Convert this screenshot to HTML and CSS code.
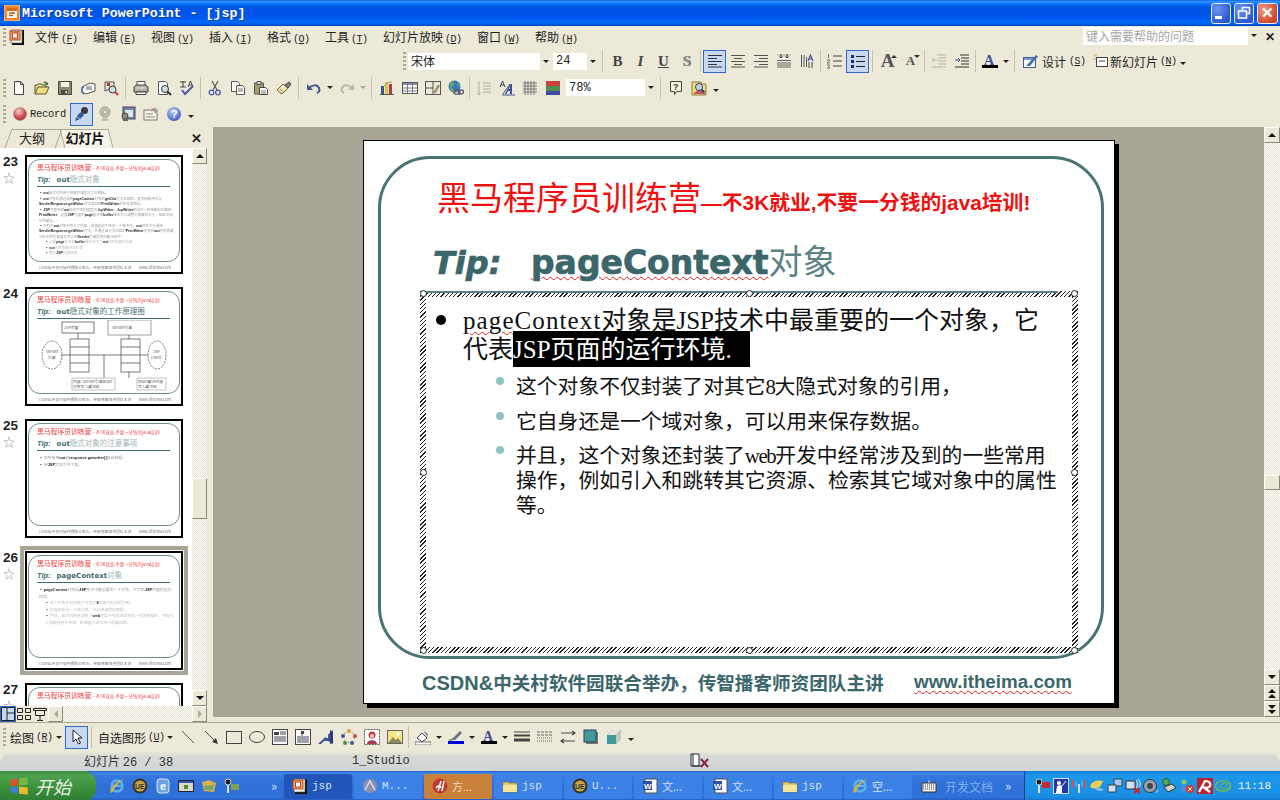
FILE: index.html
```html
<!DOCTYPE html>
<html lang="zh-CN">

<head>
    <meta charset="UTF-8">
    <title>Microsoft PowerPoint - [jsp]</title>
    <link rel="stylesheet" href="styles.css">
</head>

<body>
    <svg class="defs" xmlns="http://www.w3.org/2000/svg">
        <symbol id="pptapp" viewBox="0 0 16 16"><rect x="0" y="0" width="16" height="16" fill="#e8892b" stroke="#fff" stroke-width=".6"/><rect x="3" y="3" width="10" height="10" fill="#fff"/><path d="M3 3h10v3H3z" fill="#d2691e"/><path d="M5 8h6M5 10.500h4" stroke="#c0500f" stroke-width="1.500"/></symbol>
        <symbol id="pptdoc" viewBox="0 0 16 16"><path d="M3 1h12v15H3z" fill="#111"/><path d="M2 1h11v13H2z" fill="#fff" stroke="#555" stroke-width=".7"/><rect x="1" y="2" width="10" height="9" fill="#e9a678" stroke="#b5471b"/><rect x="3.500" y="4" width="5" height="5" fill="#fff" stroke="#b5471b"/></symbol>
        <symbol id="new" viewBox="0 0 16 16"><path d="M3.500 1.500h6l3 3v10h-9z" fill="#fff" stroke="#444"/><path d="M9.500 1.500v3h3" fill="none" stroke="#444"/></symbol>
        <symbol id="open" viewBox="0 0 16 16"><path d="M1 14V5h2l1-1h4l1 1h3v2" fill="#e9d88a" stroke="#5d5a34"/><path d="M1 14l3-7h11l-3 7z" fill="#f0dc82" stroke="#5d5a34"/><path d="M9 3c1-2 3-2 4 0l1-1v3h-3l1-1c-1-1-2-1-3-1z" fill="#4a7a4a"/></symbol>
        <symbol id="save" viewBox="0 0 16 16"><path d="M1.500 1.500h13v13h-13z" fill="#8f8c6e" stroke="#444"/><path d="M4 2h8v5H4z" fill="#f3f1e4"/><path d="M4 10h7v4.500H4z" fill="#4d4c3e"/><path d="M8.500 11h1.500v2.500H8.500z" fill="#ddd"/></symbol>
        <symbol id="mail" viewBox="0 0 16 16"><path d="M2 7l8-4 5 1v7l-9 3-4-2z" fill="#f6f5ee" stroke="#555"/><path d="M6 7h6M6 9h6" stroke="#668" /><path d="M4 14c-3-1-3-6 0-7" fill="none" stroke="#3a6fb0" stroke-width="1.200"/></symbol>
        <symbol id="perm" viewBox="0 0 16 16"><path d="M2 2h9v5l-9 4z" fill="#e8e4d3" stroke="#555"/><path d="M4 3h3v3H4z" fill="#a33"/><circle cx="9.500" cy="9.500" r="3.500" fill="#cfe0ef" stroke="#333"/><path d="M12 12l3 3" stroke="#c33" stroke-width="2"/></symbol>
        <symbol id="print" viewBox="0 0 16 16"><path d="M4 1.500h8v4H4z" fill="#fff" stroke="#555"/><path d="M1 7l2-2h10l2 2v5H1z" fill="#b3b09f" stroke="#444"/><path d="M3 12h10v2.500H3z" fill="#fff" stroke="#444"/><path d="M3 8h9" stroke="#eee"/></symbol>
        <symbol id="preview" viewBox="0 0 16 16"><path d="M2.500 1.500h7l2 2v11h-9z" fill="#fff" stroke="#555"/><circle cx="9" cy="9" r="3.500" fill="#cfe0ef" stroke="#333"/><path d="M11.500 11.500l3.500 3.500" stroke="#333" stroke-width="2"/></symbol>
        <symbol id="spell" viewBox="0 0 16 16"><path d="M1 2h6M4 1v6M1 7h6M9 7l2.500-6L14 7M10 5h3" fill="none" stroke="#444"/><path d="M3 10l3 4 8-8" fill="none" stroke="#4a5aa8" stroke-width="2"/></symbol>
        <symbol id="cut" viewBox="0 0 16 16"><path d="M5 1l5 9M11 1l-5 9" stroke="#555" stroke-width="1.200"/><circle cx="4.500" cy="12.500" r="2.300" fill="none" stroke="#4a5aa8" stroke-width="1.300"/><circle cx="11" cy="12.500" r="2.300" fill="none" stroke="#4a5aa8" stroke-width="1.300"/></symbol>
        <symbol id="copy" viewBox="0 0 16 16"><path d="M1.500 1.500h6l2 2v8h-8z" fill="#fff" stroke="#555"/><path d="M6.500 5.500h6l2 2v7h-8z" fill="#fff" stroke="#555"/><path d="M8 9h5M8 11h5" stroke="#777"/></symbol>
        <symbol id="paste" viewBox="0 0 16 16"><path d="M1.500 3h9v11h-9z" fill="#a89d70" stroke="#555"/><path d="M4 1.500h4v3H4z" fill="#ddd" stroke="#555"/><path d="M6.500 7.500h6l2 2v5h-8z" fill="#fff" stroke="#444"/><path d="M8 11h5M8 13h5" stroke="#777"/></symbol>
        <symbol id="painter" viewBox="0 0 16 16"><path d="M1 10l6-6 5 4-6 6z" fill="#f1e7b8" stroke="#6b6237"/><path d="M9 5l4-3 2 2-3 4z" fill="#7f7f86" stroke="#444"/><path d="M2 11l3 3M4 9l3 3" stroke="#b29c4d"/></symbol>
        <symbol id="undo" viewBox="0 0 16 16"><path d="M3 8c3-3 8-4 10 0 1 2 0 4-2 5" fill="none" stroke="#43588f" stroke-width="2"/><path d="M1 4v6h6z" fill="#43588f"/></symbol>
        <symbol id="redo" viewBox="0 0 16 16"><path d="M13 8c-3-3-8-4-10 0-1 2 0 4 2 5" fill="none" stroke="#b8b6a8" stroke-width="2"/><path d="M15 4v6H9z" fill="#b8b6a8"/></symbol>
        <symbol id="chart" viewBox="0 0 16 16"><path d="M1 14.500h14" stroke="#555"/><path d="M2 6h3v8H2z" fill="#2f4b95"/><path d="M6 2h3v12H6z" fill="#d9c53a"/><path d="M10 4h3v10h-3z" fill="#b7353a"/><path d="M2 14c2-8 5-12 11-12" fill="none" stroke="#777" stroke-width=".7"/></symbol>
        <symbol id="table" viewBox="0 0 16 16"><rect x=".5" y="2.500" width="15" height="11" fill="#fff" stroke="#555"/><path d="M1 3h14v2H1z" fill="#8b8ba0"/><path d="M1 8h14M1 11h14M5.500 3v10M10.500 3v10" stroke="#778"/></symbol>
        <symbol id="drawtable" viewBox="0 0 16 16"><rect x=".5" y="1.500" width="15" height="13" fill="none" stroke="#555"/><path d="M1 8h7M8 2v12" stroke="#555"/><path d="M9 12l4-7 1.500 1-4 7z" fill="#c9a64f" stroke="#555" stroke-width=".5"/></symbol>
        <symbol id="globe" viewBox="0 0 16 16"><circle cx="6.500" cy="6.500" r="6" fill="#3f74c4"/><path d="M3 2c3 0 4 2 3 3S3 6 4 8s3 1 3 4l-2 1C2 10 1 6 3 2zM9 2l3 3-2 2z" fill="#5fb05a"/><g fill="none" stroke="#556" stroke-width="1.300"><ellipse cx="9" cy="12" rx="3" ry="2.200"/><ellipse cx="13" cy="12" rx="2.600" ry="2.200"/></g></symbol>
        <symbol id="expand" viewBox="0 0 16 16"><path d="M3 1v14M1.500 13l1.500 2 1.500-2" fill="none" stroke="#b0ae9f"/><path d="M7 3h8M7 6h8M7 9h8M7 12h8" stroke="#b0ae9f"/></symbol>
        <symbol id="aformat" viewBox="0 0 16 16"><path d="M1 7l2.500-6L6 7M2 5h3" fill="none" stroke="#444"/><path d="M4 14l7-10" stroke="#555"/><path d="M6 14l5-10h2v10h-2v-3H9l-1.500 3zM10 9h1V6z" fill="#3f4fa0" fill-rule="evenodd"/><path d="M3 15h13" stroke="#3f4fa0"/></symbol>
        <symbol id="grid" viewBox="0 0 16 16"><path d="M1 3h14M1 6h14M1 9h14M1 12h14M3 1v14M6 1v14M9 1v14M12 1v14" stroke="#777"/></symbol>
        <symbol id="bars" viewBox="0 0 16 16"><path d="M1 1h14v5H1z" fill="#c9403c"/><path d="M1 6h14v5H1z" fill="#4f8f4d"/><path d="M1 11h14v4H1z" fill="#3f49a8"/></symbol>
        <symbol id="bubble" viewBox="0 0 16 16"><path d="M2.500 1.500h11v10h-5l-2 3v-3h-4z" fill="#f8f5d8" stroke="#444"/></symbol>
        <symbol id="mag" viewBox="0 0 16 16"><path d="M1 2h9l1 2h4v11H1z" fill="#f1dc7a" stroke="#8d7a3a"/><path d="M2 14l6-5 7 5z" fill="#c8506a"/><circle cx="8" cy="7" r="3.500" fill="#bcd3ea" stroke="#345"/><path d="M10.500 9.500l3 3" stroke="#345" stroke-width="2"/></symbol>
        <symbol id="ball" viewBox="0 0 16 16"><defs><radialGradient id="rb" cx=".4" cy=".3" r=".8"><stop offset="0" stop-color="#f6cfcf"/><stop offset=".6" stop-color="#d0494c"/><stop offset="1" stop-color="#9a3030"/></radialGradient></defs><circle cx="8" cy="8" r="6.500" fill="url(#rb)" stroke="#888" stroke-width=".6"/></symbol>
        <symbol id="mic" viewBox="0 0 16 16"><path d="M1 15c1-4 3-7 6-9l3 3c-2 3-5 5-9 6z" fill="#2f5b93"/><circle cx="10.500" cy="4.500" r="3.500" fill="#39393f"/><path d="M3 11l3 2" stroke="#9bbbe0"/></symbol>
        <symbol id="webcam" viewBox="0 0 16 16"><circle cx="8" cy="6" r="5" fill="#c4c2b4" stroke="#99978a"/><circle cx="8" cy="6" r="2.200" fill="#e9e7da" stroke="#99978a"/><path d="M4 15l2-4h4l2 4z" fill="#c4c2b4"/></symbol>
        <symbol id="slidecam" viewBox="0 0 16 16"><rect x="3" y="1" width="12" height="12" fill="#6f86a8" stroke="#445"/><rect x="5" y="4" width="8" height="7" fill="#dfe5ee"/><circle cx="5" cy="10" r="3" fill="#8a8a80" stroke="#444"/><rect x="3" y="12" width="5" height="3" fill="#666"/></symbol>
        <symbol id="mailslide" viewBox="0 0 16 16"><rect x="1" y="4" width="13" height="10" fill="#f7f4e6" stroke="#777"/><path d="M3 8h7M3 11h9" stroke="#888"/><path d="M9 2l6 2-3 4z" fill="#9a9fb5"/><path d="M8 5l5-3" stroke="#c63"/></symbol>
        <symbol id="helpball" viewBox="0 0 16 16"><defs><radialGradient id="hb" cx=".4" cy=".3" r=".8"><stop offset="0" stop-color="#b7cdf6"/><stop offset="1" stop-color="#2c50bb"/></radialGradient></defs><circle cx="8" cy="8" r="7" fill="url(#hb)"/></symbol>
        <symbol id="alignl" viewBox="0 0 16 16"><path d="M1 2.500h14M1 5.500h9M1 8.500h14M1 11.500h9M1 14h14" stroke="#333"/></symbol>
        <symbol id="alignc" viewBox="0 0 16 16"><path d="M1 2.500h14M4 5.500h8M1 8.500h14M4 11.500h8M1 14h14" stroke="#555"/></symbol>
        <symbol id="alignr" viewBox="0 0 16 16"><path d="M1 2.500h14M6 5.500h9M1 8.500h14M6 11.500h9M1 14h14" stroke="#555"/></symbol>
        <symbol id="vspace" viewBox="0 0 16 16"><path d="M1 7.500h14M1 10h14M1 12h14M1 14h14" stroke="#666"/><path d="M1 2h14" stroke="#aaa"/><path d="M5 1v4M3.500 3.500L5 5l1.500-1.500M11 1v4M9.500 3.500L11 5l1.500-1.500" fill="none" stroke="#333"/></symbol>
        <symbol id="hdir" viewBox="0 0 16 16"><path d="M2.500 2v12M5 2v12M7.500 4v10" stroke="#555"/><path d="M9 8l2.500-6L14 8M10 6h3" fill="none" stroke="#3f4fa0" stroke-width="1.200"/><path d="M10 9v6M13 9v6" stroke="#444"/></symbol>
        <symbol id="numlist" viewBox="0 0 16 16"><path d="M1.500 1v4M0 7h3L0 10h3M0 12h3l-1.500 1.500L3 15H0" fill="none" stroke="#555" stroke-width=".8"/><path d="M6 3h9M6 8h9M6 13h9" stroke="#444"/></symbol>
        <symbol id="bullist" viewBox="0 0 16 16"><path d="M1 2h3v3H1zM1 7h3v3H1zM1 12h3v3H1z" fill="#1c2b73"/><path d="M6 3.500h9M6 8.500h9M6 13.500h9" stroke="#222"/></symbol>
        <symbol id="outdent" viewBox="0 0 16 16"><path d="M6 2h9M7 5h8M7 8h8M7 11h8M1 14h14" stroke="#b6b4a5"/><path d="M1 7h5M3 5L1 7l2 2" fill="none" stroke="#b6b4a5"/></symbol>
        <symbol id="indent" viewBox="0 0 16 16"><path d="M6 2h9M7 5h8M7 8h8M7 11h8M1 14h14" stroke="#333"/><path d="M1 7h5M4 5l2 2-2 2" fill="none" stroke="#3f4fa0"/></symbol>
        <symbol id="colorbar" viewBox="0 0 16 16"><path d="M0 12h16v3H0z" fill="#000"/></symbol>
        <symbol id="design" viewBox="0 0 16 16"><rect x=".5" y="4.500" width="12" height="10" fill="#fff" stroke="#3f5f92"/><path d="M1 5h11v2H1z" fill="#7f9ac8"/><path d="M3 13L13 2l2 1.500L7 13z" fill="#4a6fae"/></symbol>
        <symbol id="newslide" viewBox="0 0 16 16"><path d="M2 1l2 3M1 6h3M4 1v2" stroke="#c9b45a"/><rect x="4.500" y="4.500" width="11" height="9" fill="#fff" stroke="#444"/><path d="M7 8h6" stroke="#444"/></symbol>
        <symbol id="cursor" viewBox="0 0 16 16"><path d="M4 1v12l3-3 2.500 5 2-1-2.500-5h4z" fill="#fff" stroke="#222"/></symbol>
        <symbol id="line" viewBox="0 0 16 16"><path d="M2 2l12 12" stroke="#555"/></symbol>
        <symbol id="arrow" viewBox="0 0 16 16"><path d="M2 2l12 12" stroke="#444"/><path d="M15 15l-6-2 4-4z" fill="#333"/></symbol>
        <symbol id="rect" viewBox="0 0 16 16"><rect x=".5" y="2.500" width="15" height="12" fill="none" stroke="#444"/></symbol>
        <symbol id="oval" viewBox="0 0 16 16"><ellipse cx="8" cy="8" rx="7.500" ry="5.500" fill="none" stroke="#444"/></symbol>
        <symbol id="textbox" viewBox="0 0 16 16"><rect x=".5" y=".5" width="15" height="15" fill="#fff" stroke="#444"/><path d="M2 3h5v3H2z" fill="#445"/><path d="M8 3h6M8 5h6M2 8h12M2 10h12M2 12h12" stroke="#445"/></symbol>
        <symbol id="vtext" viewBox="0 0 16 16"><rect x=".5" y=".5" width="15" height="15" fill="#fff" stroke="#444"/><path d="M3 7v7M5 7v7M7 3v11M9 7v7M11 7v7M13 7v7" stroke="#445"/><path d="M6 2h3v3H6z" fill="#445"/></symbol>
        <symbol id="wordart" viewBox="0 0 16 16"><path d="M15 1v14l-5-3H6l-3 3H0z" fill="#46529a"/><path d="M8 6v3h2V4z" fill="#ece9d8"/><path d="M12 1v14l3-1V3z" fill="#2f3a80"/></symbol>
        <symbol id="diagram" viewBox="0 0 16 16"><circle cx="8" cy="8" r="5.500" fill="none" stroke="#888" stroke-dasharray="2 2"/><circle cx="8" cy="2" r="2" fill="#d9a52e"/><circle cx="14" cy="7" r="2" fill="#c8504a"/><circle cx="11" cy="14" r="2" fill="#46529a"/><circle cx="4" cy="14" r="2" fill="#4a8f4a"/><circle cx="2" cy="7" r="2" fill="#46529a"/></symbol>
        <symbol id="clipart" viewBox="0 0 16 16"><rect x=".5" y=".5" width="15" height="15" fill="#fff" stroke="#555" stroke-dasharray="2 1"/><circle cx="8" cy="6" r="3.500" fill="#b8404a"/><path d="M3 15c0-5 10-5 10 0z" fill="#a53a55"/><circle cx="8" cy="7" r="2" fill="#eec9b0"/></symbol>
        <symbol id="picture" viewBox="0 0 16 16"><rect x=".5" y="1.500" width="15" height="13" fill="#f4e48c" stroke="#666"/><path d="M1 14l5-6 3 3 2-2 4 5z" fill="#8a8a5a"/><circle cx="11" cy="5" r="1.700" fill="#fff"/></symbol>
        <symbol id="fill" viewBox="0 0 16 16"><path d="M2 9l5-5 5 5-5 4z" fill="#fff" stroke="#444"/><path d="M8 1l5 4-1 3z" fill="#7f8eb8"/><path d="M0 13h16v3H0z" fill="#fff" stroke="#222" stroke-width=".6"/></symbol>
        <symbol id="linec" viewBox="0 0 16 16"><path d="M3 11L12 2l2 2-7 7z" fill="#6a6d88"/><path d="M1 11h3" stroke="#444"/><path d="M0 12h16v3H0z" fill="#0000d8"/></symbol>
        <symbol id="lines" viewBox="0 0 16 16"><path d="M0 3h16" stroke="#444"/><path d="M0 6.500h16" stroke="#444" stroke-width="2"/><path d="M0 11h16" stroke="#444" stroke-width="3"/></symbol>
        <symbol id="dash" viewBox="0 0 16 16"><path d="M0 3h16M0 6h16" stroke="#666" stroke-dasharray="3 1"/><path d="M0 9h16M0 12h16" stroke="#666" stroke-dasharray="1 1"/></symbol>
        <symbol id="arrows" viewBox="0 0 16 16"><path d="M1 4h14M1 12h14M12 2l3 2-3 2M4 10l-3 2 3 2" fill="none" stroke="#444" stroke-width="1.200"/></symbol>
        <symbol id="shadow" viewBox="0 0 16 16"><rect x="3" y="3" width="12" height="12" fill="#777"/><rect x="1" y="1" width="12" height="12" fill="#3e9a9a" stroke="#345"/></symbol>
        <symbol id="cube" viewBox="0 0 16 16"><path d="M1 6l5-5h9v9l-5 5H1z" fill="#3e9a9a"/><path d="M1 6h9l5-5H6z" fill="#e4e4da"/><path d="M10 6l5-5v9l-5 5z" fill="#c4c6c0"/></symbol>
        <symbol id="flag" viewBox="0 0 16 16"><path d="M1 3l6-1v5.500l-6 .500z" fill="#d9532c"/><path d="M8 2l7-1v6l-7 .500z" fill="#79b543"/><path d="M1 9l6-.500V14l-6-1z" fill="#3d7fd0"/><path d="M8 8.500l7 .500v6l-7-1z" fill="#e9bb2e"/></symbol>
        <symbol id="ie" viewBox="0 0 16 16"><circle cx="8" cy="8" r="5.500" fill="none" stroke="#5db3ec" stroke-width="2.500"/><path d="M4 8h8" stroke="#5db3ec" stroke-width="2"/><path d="M1 15C1 9 8 3 15 1c-4 3-9 7-11 13z" fill="#e9bb2e" opacity=".8"/></symbol>
        <symbol id="ue" viewBox="0 0 16 16"><circle cx="8" cy="8" r="7.500" fill="#33302a"/><circle cx="8" cy="8" r="5.500" fill="#c9a63f"/></symbol>
        <symbol id="oe" viewBox="0 0 16 16"><rect x="2" y="1" width="12" height="14" rx="3" fill="#6ea4e0" stroke="#dbe7f7"/></symbol>
        <symbol id="desk" viewBox="0 0 16 16"><rect x=".5" y="2.500" width="15" height="11" fill="#d9d7c8" stroke="#223"/><path d="M1 3h14v2H1z" fill="#2f59b0"/><path d="M6 7h4v4H6z" fill="#4a8f2d"/></symbol>
        <symbol id="colorf" viewBox="0 0 16 16"><path d="M1 4l7-2 7 3-2 9-10-1z" fill="#d9b04f"/><path d="M3 8l10-1-1 5H4z" fill="#76a568"/></symbol>
        <symbol id="plug" viewBox="0 0 16 16"><circle cx="4" cy="4" r="3" fill="#222" stroke="#ccc"/><path d="M3 7h2v8H3z" fill="#ddd"/><path d="M7 6h8v6H7z" fill="#7fa25a"/></symbol>
        <symbol id="plugr" viewBox="0 0 16 16"><circle cx="4" cy="4" r="3" fill="#222" stroke="#ccc"/><path d="M3 7h2v8H3z" fill="#ddd"/><path d="M7 4h8v6H7z" fill="#c8292f"/></symbol>
        <symbol id="folder" viewBox="0 0 16 16"><path d="M1 14V4h5l1 1h8v9z" fill="#e3c96e" stroke="#7d6a2a" stroke-width=".6"/><path d="M1 7h14v7H1z" fill="#f3e39b"/></symbol>
        <symbol id="word" viewBox="0 0 16 16"><rect x="3" y="1" width="12" height="14" fill="#fff" stroke="#555"/><rect x="1" y="3" width="9" height="9" fill="#2f4f9f"/></symbol>
        <symbol id="mdot" viewBox="0 0 16 16"><circle cx="8" cy="8" r="7" fill="#8b8fb0"/><path d="M3 12L8 3l5 9" fill="none" stroke="#dde" stroke-width="1.500"/></symbol>
        <symbol id="dw" viewBox="0 0 16 16"><circle cx="8" cy="8" r="7.500" fill="#c0392f"/><path d="M9 3L6 13M4 10c2-3 4-3 5 0M12 3l-2 10" fill="none" stroke="#fff" stroke-width="1.500"/></symbol>
        <symbol id="kbd" viewBox="0 0 16 16"><path d="M1 5h14v9H1z" fill="#f2f2ee" stroke="#333"/><path d="M2 7h12M2 9h12M2 11h12" stroke="#445" stroke-dasharray="1 1"/><path d="M8 5V2" stroke="#ddd"/></symbol>
        <symbol id="teach" viewBox="0 0 16 16"><rect x=".5" y=".5" width="15" height="15" fill="#2436a8" stroke="#cde"/><path d="M3 15l1-7 3-1 2 1v7z" fill="#fff"/><circle cx="6" cy="5" r="2" fill="#fff"/><path d="M9 8l4-5" stroke="#fff"/></symbol>
        <symbol id="antenna" viewBox="0 0 16 16"><path d="M8 6v9" stroke="#d8d8e8" stroke-width="2"/><path d="M3 2c-2 3-2 5 0 8M13 2c2 3 2 5 0 8" fill="none" stroke="#e2523e" stroke-width="1.500"/><path d="M5.500 3c-1 2-1 3 0 5M10.500 3c1 2 1 3 0 5" fill="none" stroke="#9fb7e8"/></symbol>
        <symbol id="msgr" viewBox="0 0 16 16"><path d="M1 9c0-4 6-8 13-6-2 6-6 10-13 6z" fill="#f0cd55"/><path d="M6 10c3-1 6 0 9 2-4 2-7 1-9-2z" fill="#8dbdea"/></symbol>
        <symbol id="net" viewBox="0 0 16 16"><rect x="7" y="1" width="8" height="7" fill="#a9c7ee" stroke="#345"/><rect x="1" y="7" width="8" height="7" fill="#d2dfef" stroke="#345"/></symbol>
        <symbol id="netx" viewBox="0 0 16 16"><rect x="1" y="3" width="9" height="8" fill="#d2dfef" stroke="#334"/><path d="M11 2c2 2 2 6 0 8M13 1c3 3 3 7 0 10" fill="none" stroke="#fff"/><path d="M9 10l6 5M15 10l-6 5" stroke="#c22" stroke-width="2"/></symbol>
        <symbol id="speaker" viewBox="0 0 16 16"><circle cx="7" cy="8" r="6.500" fill="#9aa3ad" stroke="#333"/><circle cx="7" cy="8" r="3" fill="#444"/><path d="M13 15l2-3" stroke="#ddd"/></symbol>
        <symbol id="shield" viewBox="0 0 16 16"><circle cx="5" cy="4" r="3.500" fill="#55a85a" stroke="#253"/><path d="M3 9l8-3 4 4-8 4z" fill="#cfd6c9" stroke="#333"/></symbol>
        <symbol id="users" viewBox="0 0 16 16"><circle cx="5" cy="4" r="2.500" fill="#8cc76e"/><path d="M1 13c0-7 8-7 8 0z" fill="#4f89d8"/><circle cx="11" cy="11" r="4" fill="#d9382e"/><path d="M9 9l4 4M13 9l-4 4" stroke="#fff"/></symbol>
        <symbol id="avira" viewBox="0 0 16 16"><rect width="16" height="16" fill="#b9232c"/><path d="M2 14L8 3c4 0 6 2 5 5-1 2-4 2-7 1l7 5" fill="none" stroke="#fff" stroke-width="2.200"/></symbol>
        <symbol id="nvidia" viewBox="0 0 16 16"><ellipse cx="8" cy="8" rx="7.500" ry="5" fill="none" stroke="#7ab648" stroke-width="1.500"/><ellipse cx="9" cy="8" rx="4" ry="2.500" fill="none" stroke="#7ab648"/></symbol>
        <symbol id="bookx" viewBox="0 0 20 16"><path d="M1 1h8v12H1z" fill="#fff" stroke="#223"/><path d="M3 1v12M3 13h9" stroke="#223"/><path d="M11 6l7 8M18 6l-7 8" stroke="#8a2340" stroke-width="2"/></symbol>
    </svg>

    <header class="titlebar">
        <svg class="ic title-ic"><use href="#pptapp"/></svg>
        <span class="title-text">Microsoft PowerPoint - [jsp]</span>
        <div class="winbtns">
            <button class="winbtn"><i class="wmin"></i></button>
            <button class="winbtn"><svg class="ic"><path d="M6.500 5V2.500h7v6H11M2.500 6h8v7h-8z" fill="none" stroke="#fff" stroke-width="1.500"/></svg></button>
            <button class="winbtn close">✕</button>
        </div>
    </header>

    <nav class="menubar">
        <span class="grip"></span>
        <svg class="ic doc-ic"><use href="#pptdoc"/></svg>
        <span class="menu w58">文件<em>(<u>F</u>)</em></span>
        <span class="menu w58">编辑<em>(<u>E</u>)</em></span>
        <span class="menu w58">视图<em>(<u>V</u>)</em></span>
        <span class="menu w58">插入<em>(<u>I</u>)</em></span>
        <span class="menu w58">格式<em>(<u>O</u>)</em></span>
        <span class="menu w58">工具<em>(<u>T</u>)</em></span>
        <span class="menu w94">幻灯片放映<em>(<u>D</u>)</em></span>
        <span class="menu w58">窗口<em>(<u>W</u>)</em></span>
        <span class="menu w58">帮助<em>(<u>H</u>)</em></span>
        <div class="askbox"><span>键入需要帮助的问题</span><b class="dd-cell"><i class="dd"></i></b></div>
        <span class="ask-x">✕</span>
    </nav>

    <div class="toolrow format-row">
        <span class="grip"></span>
        <div class="combo fontname"><span>宋体</span><b class="dd-cell"><i class="dd"></i></b></div>
        <div class="combo fontsize"><span class="mono">24</span><b class="dd-cell"><i class="dd"></i></b></div>
        <span class="sep"></span>
        <span class="btn letter"><b>B</b></span>
        <span class="btn letter"><b><i>I</i></b></span>
        <span class="btn letter"><b><u>U</u></b></span>
        <span class="btn letter ghost"><b>S</b></span>
        <span class="sep s5"></span>
        <span class="btn on"><svg class="ic"><use href="#alignl"/></svg></span>
        <span class="btn"><svg class="ic"><use href="#alignc"/></svg></span>
        <span class="btn"><svg class="ic"><use href="#alignr"/></svg></span>
        <span class="btn"><svg class="ic"><use href="#vspace"/></svg></span>
        <span class="btn"><svg class="ic"><use href="#hdir"/></svg></span>
        <span class="sep s5"></span>
        <span class="btn"><svg class="ic"><use href="#numlist"/></svg></span>
        <span class="btn on"><svg class="ic"><use href="#bullist"/></svg></span>
        <span class="sep"></span>
        <span class="btn sizea grow">A</span>
        <span class="btn sizea shrink">A</span>
        <span class="sep s5"></span>
        <span class="btn"><svg class="ic"><use href="#outdent"/></svg></span>
        <span class="btn"><svg class="ic"><use href="#indent"/></svg></span>
        <span class="sep s5"></span>
        <span class="btn"><svg class="ic"><use href="#colorbar"/><text class="ict-serif blue" x="2" y="11.500" font-size="14">A</text></svg></span>
        <span class="drop"><i class="dd"></i></span>
        <span class="sep"></span>
        <span class="txtbtn w67"><svg class="ic"><use href="#design"/></svg>设计<em>(<u>S</u>)</em></span>
        <span class="txtbtn w90"><svg class="ic"><use href="#newslide"/></svg>新幻灯片<em>(<u>N</u>)</em></span>
        <span class="more"></span>
    </div>

    <div class="toolrow std-row">
        <span class="grip"></span>
        <span class="btn"><svg class="ic"><use href="#new"/></svg></span>
        <span class="btn"><svg class="ic"><use href="#open"/></svg></span>
        <span class="btn"><svg class="ic"><use href="#save"/></svg></span>
        <span class="btn"><svg class="ic"><use href="#mail"/></svg></span>
        <span class="btn"><svg class="ic"><use href="#perm"/></svg></span>
        <span class="sep"></span>
        <span class="btn"><svg class="ic"><use href="#print"/></svg></span>
        <span class="btn"><svg class="ic"><use href="#preview"/></svg></span>
        <span class="btn"><svg class="ic"><use href="#spell"/></svg></span>
        <span class="sep s5"></span>
        <span class="btn"><svg class="ic"><use href="#cut"/></svg></span>
        <span class="btn"><svg class="ic"><use href="#copy"/></svg></span>
        <span class="btn"><svg class="ic"><use href="#paste"/></svg></span>
        <span class="btn"><svg class="ic"><use href="#painter"/></svg></span>
        <span class="sep"></span>
        <span class="btn"><svg class="ic"><use href="#undo"/></svg></span>
        <span class="drop"><i class="dd"></i></span>
        <span class="btn"><svg class="ic"><use href="#redo"/></svg></span>
        <span class="drop"><i class="dd off"></i></span>
        <span class="sep"></span>
        <span class="btn"><svg class="ic"><use href="#chart"/></svg></span>
        <span class="btn"><svg class="ic"><use href="#table"/></svg></span>
        <span class="btn"><svg class="ic"><use href="#drawtable"/></svg></span>
        <span class="btn"><svg class="ic"><use href="#globe"/></svg></span>
        <span class="sep s5"></span>
        <span class="btn"><svg class="ic"><use href="#expand"/></svg></span>
        <span class="btn"><svg class="ic"><use href="#aformat"/></svg></span>
        <span class="btn"><svg class="ic"><use href="#grid"/></svg></span>
        <span class="btn"><svg class="ic"><use href="#bars"/></svg></span>
        <div class="combo zoombox"><span class="mono">78%</span><b class="dd-cell"><i class="dd"></i></b></div>
        <span class="sep"></span>
        <span class="btn"><svg class="ic"><use href="#bubble"/><text class="ict" x="5" y="10" font-size="9">?</text></svg></span>
        <span class="btn"><svg class="ic"><use href="#mag"/></svg></span>
        <span class="more"></span>
    </div>

    <div class="toolrow rec-row">
        <span class="grip"></span>
        <svg class="ic rec-ball"><use href="#ball"/></svg>
        <span class="rec-text">Record</span>
        <span class="btn on"><svg class="ic"><use href="#mic"/></svg></span>
        <span class="btn"><svg class="ic"><use href="#webcam"/></svg></span>
        <span class="btn"><svg class="ic"><use href="#slidecam"/></svg></span>
        <span class="btn"><svg class="ic"><use href="#mailslide"/></svg></span>
        <span class="btn"><svg class="ic"><use href="#helpball"/><text class="ict white" x="5" y="12" font-size="11">?</text></svg></span>
        <span class="more"></span>
    </div>

    <main class="workspace">
        <aside class="leftpane">
            <div class="tabs">
                <span class="tab">大纲</span>
                <span class="tab active">幻灯片</span>
                <span class="pane-x">✕</span>
            </div>
            <div class="thumbs-wrap">
                <div class="thumbs">
                    <div class="thumb-row">
                        <div class="thumb-num"><b>23</b><span>☆</span></div>
                        <div class="thumb">
                            <div class="t-frame"></div>
                            <div class="t-title">黑马程序员训练营<small>—不3K就业,不要一分钱的java培训!</small></div>
                            <div class="t-tip"><i>Tip:</i><b>out</b><span>隐式对象</span></div>
                            <div class="t-body">
                                <p><b>out</b>隐式对象用于向客户端发送文本数据。</p>
                                <p><b>out</b>对象是通过调用<b>pageContext</b>对象的<b>getOut</b>方法返回的，其作用和用法与<b>ServletResponse.getWriter</b>方法返回的<b>PrintWriter</b>对象非常相似。</p>
                                <p><b>JSP</b>页面中的<b>out</b>隐式对象的类型为<b>JspWriter</b>，<b>JspWriter</b>相当于一种带缓存功能的<b>PrintWriter</b>，设置<b>JSP</b>页面的<b>page</b>指令的<b>buffer</b>属性可以调整它的缓存大小，甚至关闭它的缓存。</p>
                                <p>只有向<b>out</b>对象中写入了内容，且满足如下任何一个条件时，<b>out</b>对象才去调用<b>ServletResponse.getWriter</b>方法，并通过该方法返回的<b>PrintWriter</b>对象将<b>out</b>对象的缓冲区中的内容真正写入到<b>Servlet</b>引擎提供的缓冲区中：</p>
                                <p class="sub">设置<b>page</b>指令的<b>buffer</b>属性关闭了<b>out</b>对象的缓存功能</p>
                                <p class="sub"><b>out</b>对象的缓冲区已满</p>
                                <p class="sub">整个<b>JSP</b>页面结束</p>
                            </div>
                            <div class="t-foot"><span>CSDN&amp;中关村软件园联合举办，传智播客师资团队主讲</span><span>www.itheima.com</span></div>
                        </div>
                    </div>
                    <div class="thumb-row">
                        <div class="thumb-num"><b>24</b></div>
                        <div class="thumb">
                            <div class="t-frame"></div>
                            <div class="t-title">黑马程序员训练营<small>—不3K就业,不要一分钱的java培训!</small></div>
                            <div class="t-tip"><i>Tip:</i><b>out</b><span class="dark">隐式对象的工作原理图</span></div>
                            <svg class="t-diagram" viewBox="0 0 152 72">
                                <g fill="none" stroke="#444" stroke-width=".7">
                                    <rect x="34" y="2" width="32" height="11"/>
                                    <rect x="80" y="0" width="43" height="15" stroke="#777"/>
                                    <rect x="42" y="19" width="19" height="33"/>
                                    <rect x="93" y="19" width="19" height="33"/>
                                    <path d="M42 27h19M42 35h19M42 43h19M93 27h19M93 35h19M93 43h19M50 13v6M101 15v4M61 35h32M76 35v23M101 52v6M42 35h-9M120 35h-8" />
                                    <ellipse cx="24" cy="35" rx="10" ry="14" stroke-dasharray="2 1"/>
                                    <ellipse cx="129" cy="35" rx="9" ry="14" stroke-dasharray="2 1"/>
                                    <path d="M44 58h43v12H44zM109 58h29v12h-29z" stroke="#aaa"/>
                                </g>
                                <g class="t-dtext" font-size="3.800">
                                    <text x="36" y="9">JSP页面</text>
                                    <text x="84" y="9">Servlet引擎</text>
                                    <text x="18" y="33">Servlet</text>
                                    <text x="20" y="39">引擎</text>
                                    <text x="125" y="33">JSP</text>
                                    <text x="123" y="39">Client</text>
                                    <text x="45" y="63">内容: Servlet引擎将out</text>
                                    <text x="45" y="68">对象写入缓冲区</text>
                                    <text x="110" y="63">将out缓冲内容</text>
                                    <text x="110" y="68">写入缓冲区</text>
                                </g>
                            </svg>
                            <div class="t-foot"><span>CSDN&amp;中关村软件园联合举办，传智播客师资团队主讲</span><span>www.itheima.com</span></div>
                        </div>
                    </div>
                    <div class="thumb-row">
                        <div class="thumb-num"><b>25</b><span>☆</span></div>
                        <div class="thumb">
                            <div class="t-frame"></div>
                            <div class="t-title">黑马程序员训练营<small>—不3K就业,不要一分钱的java培训!</small></div>
                            <div class="t-tip"><i>Tip:</i><b>out</b><span>隐式对象的注意事项</span></div>
                            <div class="t-body roomy">
                                <p>同时使用<b>out</b>和<b>response.getwriter()</b>输出数据。</p>
                                <p>用<b>JSP</b>实现文件下载。</p>
                            </div>
                            <div class="t-foot"><span>CSDN&amp;中关村软件园联合举办，传智播客师资团队主讲</span><span>www.itheima.com</span></div>
                        </div>
                    </div>
                    <div class="thumb-row">
                        <div class="thumb-num"><b>26</b><span>☆</span></div>
                        <div class="thumb current">
                            <div class="t-frame"></div>
                            <div class="t-title">黑马程序员训练营<small>—不3K就业,不要一分钱的java培训!</small></div>
                            <div class="t-tip"><i>Tip:</i><b>pageContext</b><span>对象</span></div>
                            <div class="t-body roomy">
                                <p><b>pageContext</b>对象是<b>JSP</b>技术中最重要的一个对象，它代表<b>JSP</b>页面的运行环境.</p>
                                <p class="sub">这个对象不仅封装了对其它<b>8</b>大隐式对象的引用，</p>
                                <p class="sub">它自身还是一个域对象，可以用来保存数据。</p>
                                <p class="sub">并且，这个对象还封装了<b>web</b>开发中经常涉及到的一些常用操作，例如引入和跳转其它资源、检索其它域对象中的属性等。</p>
                            </div>
                            <div class="t-foot"><span>CSDN&amp;中关村软件园联合举办，传智播客师资团队主讲</span><span>www.itheima.com</span></div>
                        </div>
                    </div>
                    <div class="thumb-row">
                        <div class="thumb-num"><b>27</b><span>☆</span></div>
                        <div class="thumb">
                            <div class="t-frame"></div>
                            <div class="t-title">黑马程序员训练营<small>—不3K就业,不要一分钱的java培训!</small></div>
                        </div>
                    </div>
                </div>
                <div class="vscroll thin">
                    <span class="sbtn"><i class="tri up"></i></span>
                    <div class="track">
                        <span class="sthumb t1"></span>
                    </div>
                    <span class="sbtn"><i class="tri down"></i></span>
                </div>
            </div>
            <div class="viewbar">
                <span class="viewbtn on"><svg class="ic"><path d="M1.500 1.500h13v13h-13zM7 2v12M7 7h7" fill="none" stroke="#222"/></svg></span>
                <span class="viewbtn"><svg class="ic"><path d="M1.500 2.500h5v4h-5zM9.500 2.500h5v4h-5zM1.500 9.500h5v4h-5zM9.500 9.500h5v4h-5z" fill="none" stroke="#222"/></svg></span>
                <span class="viewbtn"><svg class="ic"><path d="M1.500 2.500h13v2h-13zM3.500 4.500h9v5h-9zM8 10v4M5 14.500h6" fill="none" stroke="#222"/></svg></span>
                <div class="hscroll">
                    <span class="sbtn"><i class="tri left off"></i></span>
                    <div class="track"></div>
                    <span class="sbtn"><i class="tri right off"></i></span>
                </div>
            </div>
        </aside>

        <div class="splitter"></div>

        <section class="canvas">
            <div class="slide">
                <div class="frame"></div>
                <h1 class="s-title">黑马程序员训练营<small>—不3K就业,不要一分钱的java培训!</small></h1>
                <h2 class="s-tip"><i>Tip:</i><b class="wavy">pageContext</b><span>对象</span></h2>
                <div class="selbox">
                    <span class="tline"></span>
                    <span class="h tl"></span><span class="h tc"></span><span class="h tr"></span>
                    <span class="h ml"></span><span class="h mr"></span>
                    <span class="h bl"></span><span class="h bc"></span><span class="h br"></span>
                    <div class="sel-inner">
                        <div class="item">
                            <span class="dot"></span>
                            <p><span class="lat long wavy">pageContext</span>对象是<span class="lat">JSP</span>技术中最重要的一个对象，它<br>代表<span class="hl"><span class="lat">JSP</span>页面的运行环境<span class="lat stop">.</span></span></p>
                        </div>
                        <div class="subitem">
                            <span class="subdot"></span>
                            <p>这个对象不仅封装了对其它<span class="lat2">8</span>大隐式对象的引用，</p>
                        </div>
                        <div class="subitem">
                            <span class="subdot"></span>
                            <p>它自身还是一个域对象，可以用来保存数据。</p>
                        </div>
                        <div class="subitem">
                            <span class="subdot"></span>
                            <p>并且，这个对象还封装了<span class="lat2">web</span>开发中经常涉及到的一些常用<br>操作，例如引入和跳转其它资源、检索其它域对象中的属性<br>等。</p>
                        </div>
                    </div>
                </div>
                <footer class="s-foot"><span><b>CSDN&amp;</b>中关村软件园联合举办，传智播客师资团队主讲</span><span class="wavy site">www.itheima.com</span></footer>
            </div>
        </section>

        <div class="vscroll wide">
            <span class="sbtn"><i class="tri up"></i></span>
            <div class="track"><span class="sthumb t2"></span></div>
            <span class="sbtn"><i class="tri down"></i></span>
            <span class="sbtn"><i class="tri up dbl"></i></span>
            <span class="sbtn"><i class="tri down dbl"></i></span>
        </div>
    </main>

    <div class="toolrow draw-row">
        <span class="grip"></span>
        <span class="txtbtn w48">绘图<em>(<u>R</u>)</em></span>
        <span class="drop tight"><i class="dd"></i></span>
        <span class="btn on"><svg class="ic"><use href="#cursor"/></svg></span>
        <span class="sep"></span>
        <span class="txtbtn w70">自选图形<em>(<u>U</u>)</em></span>
        <span class="drop tight"><i class="dd"></i></span>
        <span class="btn"><svg class="ic"><use href="#line"/></svg></span>
        <span class="btn"><svg class="ic"><use href="#arrow"/></svg></span>
        <span class="btn"><svg class="ic"><use href="#rect"/></svg></span>
        <span class="btn"><svg class="ic"><use href="#oval"/></svg></span>
        <span class="btn"><svg class="ic"><use href="#textbox"/></svg></span>
        <span class="btn"><svg class="ic"><use href="#vtext"/></svg></span>
        <span class="btn"><svg class="ic"><use href="#wordart"/></svg></span>
        <span class="btn"><svg class="ic"><use href="#diagram"/></svg></span>
        <span class="btn"><svg class="ic"><use href="#clipart"/></svg></span>
        <span class="btn"><svg class="ic"><use href="#picture"/></svg></span>
        <span class="sep s5"></span>
        <span class="btn"><svg class="ic"><use href="#fill"/></svg></span>
        <span class="drop"><i class="dd"></i></span>
        <span class="btn"><svg class="ic"><use href="#linec"/></svg></span>
        <span class="drop"><i class="dd"></i></span>
        <span class="btn"><svg class="ic"><use href="#colorbar"/><text class="ict-serif blue" x="2" y="11.500" font-size="14">A</text></svg></span>
        <span class="drop"><i class="dd"></i></span>
        <span class="btn"><svg class="ic"><use href="#lines"/></svg></span>
        <span class="btn"><svg class="ic"><use href="#dash"/></svg></span>
        <span class="btn"><svg class="ic"><use href="#arrows"/></svg></span>
        <span class="btn"><svg class="ic"><use href="#shadow"/></svg></span>
        <span class="btn"><svg class="ic"><use href="#cube"/></svg></span>
        <span class="more"></span>
    </div>

    <div class="statusbar">
        <span class="st-a">幻灯片 <span class="mono">26 / 38</span></span>
        <span class="st-b mono">1_Studio</span>
        <svg class="st-ic"><use href="#bookx"/></svg>
    </div>

    <footer class="taskbar">
        <div class="start"><svg class="ic"><use href="#flag"/></svg><span>开始</span></div>
        <div class="quick">
            <svg class="ic"><use href="#ie"/></svg>
            <svg class="ic"><use href="#ue"/><text class="ict" x="3" y="11" font-size="7">UE</text></svg>
            <svg class="ic"><use href="#oe"/><text class="ict white" x="5" y="12" font-size="11">e</text></svg>
            <svg class="ic"><use href="#desk"/></svg>
            <svg class="ic"><use href="#colorf"/></svg>
            <svg class="ic"><use href="#plug"/></svg>
            <span class="chev">»</span>
        </div>
        <div class="tasks">
            <span class="task active"><svg class="ic"><use href="#pptdoc"/></svg><span class="mono">jsp</span></span>
            <span class="task"><svg class="ic"><use href="#mdot"/></svg><span class="mono">M...</span></span>
            <span class="task orange"><svg class="ic"><use href="#dw"/></svg>方...</span>
            <span class="task"><svg class="ic"><use href="#folder"/></svg><span class="mono">jsp</span></span>
            <span class="task"><svg class="ic"><use href="#ue"/><text class="ict" x="3" y="11" font-size="7">UE</text></svg><span class="mono">U...</span></span>
            <span class="task"><svg class="ic"><use href="#word"/><text class="ict white" x="2" y="10.500" font-size="8">W</text></svg>文...</span>
            <span class="task"><svg class="ic"><use href="#word"/><text class="ict white" x="2" y="10.500" font-size="8">W</text></svg>文...</span>
            <span class="task"><svg class="ic"><use href="#folder"/></svg><span class="mono">jsp</span></span>
            <span class="task"><svg class="ic"><use href="#ie"/></svg>空...</span>
        </div>
        <div class="devdoc"><svg class="ic"><use href="#kbd"/></svg><span>开发文档</span><span class="chev">»</span></div>
        <div class="tray">
            <svg class="ic"><use href="#plugr"/></svg>
            <svg class="ic"><use href="#teach"/></svg>
            <svg class="ic"><use href="#antenna"/></svg>
            <svg class="ic"><use href="#msgr"/></svg>
            <svg class="ic"><use href="#net"/></svg>
            <svg class="ic"><use href="#netx"/></svg>
            <svg class="ic"><use href="#speaker"/></svg>
            <svg class="ic"><use href="#shield"/></svg>
            <svg class="ic"><use href="#users"/></svg>
            <svg class="ic"><use href="#avira"/></svg>
            <svg class="ic"><use href="#nvidia"/></svg>
            <span class="clock mono">11:18</span>
        </div>
    </footer>
</body>

</html>
```

FILE: styles.css
```css
/* page */
* {
    box-sizing: border-box;
}

body {
    margin: 0;
    width: 1280px;
    height: 800px;
    overflow: hidden;
    display: flex;
    flex-direction: column;
    background-color: #ece9d8;
    color: #222;
    font-family: "Noto Sans CJK SC", "Liberation Sans", sans-serif;
    font-size: 12px;
}

p,
h1,
h2 {
    margin: 0;
    font-weight: normal;
}

.defs {
    position: absolute;
    width: 0;
    height: 0;
}

.ic {
    width: 16px;
    height: 16px;
    flex: none;
}

/* letters inside icons */
.ict {
    font-family: "Liberation Sans", sans-serif;
    font-weight: bold;
    fill: #333;
}

.ict-serif {
    font-family: "Liberation Serif", serif;
    font-weight: bold;
    fill: #555;
}

.ict.white {
    fill: #fff;
}

.ict-serif.blue {
    fill: #3f4a8f;
}

.mono {
    font-family: "Liberation Mono", monospace;
}

em {
    font-style: normal;
    font-family: "Liberation Mono", monospace;
    font-size: 10px;
    letter-spacing: -0.5px;
    margin-left: 2px;
}

/* title bar */
.titlebar {
    height: 26px;
    flex: none;
    display: flex;
    align-items: center;
    padding-left: 4px;
    background: linear-gradient(#0a5fe0, #3593ff 6%, #127dff 12%, #0262ee 20%, #0054e3 30%, #0055eb 60%, #005bf5 72%, #026afe 82%, #0062ef 90%, #0052d6 96%, #0040ab);
}

.title-text {
    margin-left: 2px;
    color: #fff;
    font-family: "Liberation Mono", monospace;
    font-weight: bold;
    font-size: 13.300px;
    text-shadow: 1px 1px #0f3fa0;
}

.winbtns {
    margin-left: auto;
    margin-right: 2px;
    display: flex;
    gap: 3px;
}

.winbtn {
    width: 20px;
    height: 21px;
    padding: 0;
    display: flex;
    align-items: center;
    justify-content: center;
    color: #fff;
    font-size: 15px;
    font-weight: bold;
    border: 1px solid #e6eefc;
    border-radius: 3px;
    background: radial-gradient(circle at 30% 30%, #6d96ee, #2b56cf 75%);
}

.winbtn.close {
    width: 21px;
    background: radial-gradient(circle at 30% 30%, #ee9a80, #d1452a 75%);
}

.wmin {
    display: block;
    width: 7px;
    height: 3px;
    margin: 8px 5px 0 0;
    background-color: #fff;
}

/* menu bar */
.menubar {
    height: 22px;
    flex: none;
    display: flex;
    align-items: center;
    padding-left: 3px;
}

.grip {
    width: 3px;
    height: 18px;
    flex: none;
    background: repeating-linear-gradient(#aaa795 0 2px, transparent 2px 4px);
}

.doc-ic {
    margin: 0 10px 0 3px;
}

.menu {
    white-space: nowrap;
    margin-top: -2px;
}

.w58 {
    width: 58px;
}

.w94 {
    width: 94px;
}

.askbox {
    margin-left: auto;
    margin-top: -3px;
    width: 177px;
    height: 18px;
    display: flex;
    justify-content: space-between;
    align-items: center;
    background-color: #fff;
    color: #a5a5a5;
    padding-left: 3px;
}

.ask-x {
    width: 20px;
    text-align: center;
    font-weight: bold;
    margin-top: -3px;
}

/* tool rows */
.toolrow {
    flex: none;
    display: flex;
    align-items: center;
}

.format-row {
    height: 26px;
    padding-left: 403px;
}

.std-row {
    height: 27px;
    padding-left: 3px;
}

.rec-row {
    height: 26px;
    padding-left: 3px;
}

.draw-row {
    height: 29px;
    padding-left: 3px;
    border-top: 1px solid #aca899;
}

.btn {
    width: 23px;
    height: 23px;
    flex: none;
    display: flex;
    align-items: center;
    justify-content: center;
}

.std-row .grip + .btn {
    margin-left: 1px;
}

.btn.on {
    background-color: #c8d8f0;
    border: 1px solid #316ac5;
}

.letter {
    font-family: "Liberation Serif", serif;
    font-size: 15px;
    color: #444;
}

.ghost {
    color: #999;
    text-shadow: 1px 0 #666;
}

.sizea {
    position: relative;
    font-family: "Liberation Serif", serif;
    font-weight: bold;
    color: #555;
}

.grow {
    font-size: 19px;
}

.shrink {
    font-size: 13px;
}

.sizea::after {
    content: "";
    position: absolute;
    top: 5px;
    right: 2px;
    border-left: 3px solid transparent;
    border-right: 3px solid transparent;
}

.grow::after {
    border-bottom: 3px solid #333;
}

.shrink::after {
    border-top: 3px solid #333;
}

.sep {
    width: 7px;
    flex: none;
    height: 22px;
    display: flex;
    justify-content: center;
}

.sep::before {
    content: "";
    width: 1px;
    background-color: #c5c2b0;
}

.s5 {
    width: 5px;
}

.drop {
    width: 10px;
    flex: none;
    display: flex;
    justify-content: center;
}

.drop.tight {
    width: 12px;
}

.dd {
    display: block;
    width: 0;
    height: 0;
    border-left: 3px solid transparent;
    border-right: 3px solid transparent;
    border-top: 3px solid #222;
}

.dd.off {
    border-top-color: #aaa895;
}

.dd-cell {
    width: 12px;
    height: 100%;
    display: flex;
    align-items: center;
    justify-content: center;
    background-color: #ece9d8;
    flex: none;
}

.combo {
    height: 17px;
    flex: none;
    display: flex;
    align-items: center;
    justify-content: space-between;
    padding-left: 3px;
    background-color: #fff;
}

.fontname {
    width: 144px;
    margin-left: 2px;
}

.fontname span {
    margin-top: -2px;
}

.fontsize {
    width: 46px;
    margin-left: 1px;
}

.zoombox {
    width: 91px;
    margin-left: 2px;
}

.txtbtn {
    flex: none;
    display: flex;
    align-items: center;
    gap: 2px;
    white-space: nowrap;
}

.w67 {
    width: 69px;
    padding-left: 5px;
    gap: 3px;
}

.w90 {
    width: 90px;
    padding-left: 5px;
}

.w48 {
    width: 47px;
    padding-left: 4px;
}

.w70 {
    width: 69px;
    padding-left: 3px;
}

.txtbtn em {
    margin-left: 0;
}

.more {
    width: 8px;
    height: 8px;
    flex: none;
    margin-left: 2px;
    margin-top: 6px;
    position: relative;
}

.more::after {
    content: "";
    position: absolute;
    left: 1px;
    top: 2px;
    border-left: 3px solid transparent;
    border-right: 3px solid transparent;
    border-top: 3px solid #222;
}

.rec-ball {
    margin-left: 6px;
}

.rec-text {
    width: 42px;
    padding-left: 2px;
    font-family: "Liberation Mono", monospace;
    font-size: 10.500px;
    letter-spacing: -0.300px;
}

/* main part */
.workspace {
    flex: none;
    height: 595px;
    display: flex;
}

.leftpane {
    width: 207px;
    flex: none;
    display: flex;
    flex-direction: column;
}

.tabs {
    height: 21px;
    flex: none;
    display: flex;
    align-items: flex-end;
    padding-left: 5px;
    font-size: 13px;
}

.tab {
    height: 19px;
    width: 54px;
    text-align: center;
    line-height: 17px;
    position: relative;
}

.tab::before {
    content: "";
    position: absolute;
    inset: 0 0 0 3px;
    border: 1px solid #aca899;
    border-bottom: none;
    transform: skewX(-20deg);
}

.tab.active {
    width: 52px;
    font-weight: bold;
    color: #111;
}

.tab.active::before {
    background-color: #f5f3e8;
    z-index: -1;
    transform: skewX(15deg);
}

.pane-x {
    margin-left: auto;
    margin-right: 5px;
    font-weight: bold;
    line-height: 20px;
}

.thumbs-wrap {
    height: 558px;
    flex: none;
    display: flex;
    background-color: #fff;
}

.thumbs {
    width: 192px;
    flex: none;
    overflow: hidden;
    padding-top: 7px;
}

.thumb-row {
    display: flex;
    height: 132px;
}

.thumb-num {
    width: 25px;
    flex: none;
    padding-left: 3px;
    display: flex;
    flex-direction: column;
    font-family: "Liberation Sans", sans-serif;
    line-height: 14px;
    font-size: 13.500px;
}

.thumb-num span {
    color: #999;
    font-size: 12px;
    line-height: 12px;
    margin-top: 4px;
}

.thumb {
    width: 158px;
    height: 119px;
    flex: none;
    position: relative;
    border: 2px solid #000;
    background-color: #fff;
    padding: 0 1px;
    display: flex;
    flex-direction: column;
}

.thumb.current {
    box-shadow: 0 0 0 1px #fff, 0 0 0 5px #a8a597;
}

.t-frame {
    position: absolute;
    left: 1px;
    right: 1px;
    top: 2px;
    bottom: 10px;
    border: 1px solid #6e8c8e;
    border-radius: 12px;
}

.t-title {
    margin: 6px 0 0 9px;
    color: #f23a3a;
    font-size: 6.800px;
    line-height: 9px;
    white-space: nowrap;
    filter: blur(.3px);
}

.t-title small {
    font-size: 4.400px;
    color: #e85050;
}

.t-tip {
    margin: 2px 0 0 9px;
    box-sizing: content-box;
    width: 133px;
    height: 7px;
    padding-bottom: 4px;
    line-height: 7px;
    font-size: 7.500px;
    white-space: nowrap;
    color: #9eb4b5;
    border-bottom: 1px solid #3f6b6f;
}

.t-tip i {
    font-family: "Liberation Sans", sans-serif;
    font-weight: bold;
    color: #3f6b6f;
    margin-right: 6px;
}

.t-tip b {
    font-family: "DejaVu Sans", sans-serif;
    font-size: 7px;
    color: #3f6b6f;
}

.t-tip .dark {
    color: #4a7070;
}

.t-body {
    margin: 3px 5px 0 11px;
    font-size: 3.500px;
    line-height: 5.100px;
    color: #9a9a9a;
    filter: blur(.25px);
}

.t-body.roomy {
    font-size: 3.900px;
    line-height: 6.600px;
}

.t-body p::before {
    content: "▪ ";
    color: #333;
}

.t-body p.sub {
    margin-left: 6px;
    color: #bbb;
}

.t-body b {
    color: #222;
    font-family: "Liberation Sans", sans-serif;
    line-height: 1;
}

.t-diagram {
    display: block;
    width: 152px;
    height: 72px;
    margin-top: 1px;
    flex: none;
}

.t-dtext {
    font-family: "Noto Sans CJK SC", sans-serif;
    fill: #555;
}

.t-foot {
    position: absolute;
    left: 12px;
    right: 10px;
    bottom: 2px;
    display: flex;
    justify-content: space-between;
    font-size: 3.800px;
    line-height: 5px;
    color: #777;
    white-space: nowrap;
    filter: blur(.25px);
}

/* scrollbars */
.vscroll {
    flex: none;
    display: flex;
    flex-direction: column;
}

.vscroll.thin {
    width: 15px;
    height: 558px;
}

.vscroll.wide {
    width: 16px;
    height: 590px;
}

.sbtn {
    flex: none;
    width: 100%;
    height: 16px;
    display: flex;
    align-items: center;
    justify-content: center;
    background-color: #ece9d8;
    border: 1px solid;
    border-color: #fff #8a8876 #8a8876 #fff;
}

.tri {
    display: block;
    width: 0;
    height: 0;
    border: 4px solid transparent;
}

.tri.up {
    border-bottom-color: #111;
    border-top-width: 0;
}

.tri.down {
    border-top-color: #111;
    border-bottom-width: 0;
}

.tri.left {
    border-right-color: #111;
    border-left-width: 0;
}

.tri.right {
    border-left-color: #111;
    border-right-width: 0;
}

.tri.off {
    border-right-color: #aca899;
    border-left-color: #aca899;
}

.tri.dbl {
    transform: translateY(-2px);
    filter: drop-shadow(0 5px 0 #111);
}

.track {
    flex: 1;
    min-height: 0;
    background: conic-gradient(#fff 25%, #e4e1ce 0 50%, #fff 0 75%, #e4e1ce 0) 0 0 / 2px 2px;
}

.sthumb {
    display: block;
    background-color: #ece9d8;
    border: 1px solid;
    border-color: #fff #8a8876 #8a8876 #fff;
}

.t1 {
    height: 41px;
    margin-top: 314px;
}

.t2 {
    height: 15px;
    margin-top: 332px;
}

.viewbar {
    height: 16px;
    flex: none;
    display: flex;
    align-items: center;
    background-color: #ece9d8;
}

.viewbtn {
    width: 16px;
    height: 16px;
    flex: none;
    display: flex;
    align-items: center;
    justify-content: center;
}

.viewbtn.on {
    background-color: #c8d8f0;
    border: 1px solid #316ac5;
}

.hscroll {
    flex: 1;
    height: 16px;
    display: flex;
}

.hscroll .sbtn {
    width: 15px;
}

.splitter {
    width: 6px;
    flex: none;
    background-color: #ece9d8;
}

/* slide area */
.canvas {
    width: 1051px;
    height: 590px;
    flex: none;
    background-color: #a8a597;
    padding: 13px 0 0 150px;
}

.slide {
    width: 752px;
    height: 564px;
    position: relative;
    background-color: #fff;
    border: 1px solid #000;
    box-shadow: 4px 4px 0 #000;
    padding-top: 34px;
}

.frame {
    position: absolute;
    left: 14px;
    top: 15px;
    width: 726px;
    height: 503px;
    border: 3px solid #4a7375;
    border-radius: 52px;
}

.s-title {
    margin-left: 73px;
    height: 42px;
    line-height: 42px;
    font-size: 33px;
    color: #ee1111;
    white-space: nowrap;
    position: relative;
}

.s-title small {
    font-size: 20.800px;
    font-weight: bold;
    font-family: "Liberation Sans", "Noto Sans CJK SC", sans-serif;
}

.s-tip {
    margin: 21px 0 0 69px;
    height: 44px;
    line-height: 44px;
    white-space: nowrap;
    color: #5d8284;
    font-size: 34px;
    position: relative;
}

.s-tip i {
    display: inline-block;
    width: 98px;
    font-family: "DejaVu Sans", sans-serif;
    font-weight: bold;
    font-size: 32px;
    color: #3b666a;
    -webkit-text-stroke: 0.700px #3b666a;
}

.s-tip b {
    font-family: "DejaVu Sans", sans-serif;
    font-weight: bold;
    font-size: 33px;
    color: #3b666a;
    -webkit-text-stroke: 0.700px #3b666a;
}

.wavy {
    text-decoration: underline wavy #dd2222 1px;
    text-underline-offset: 2px;
}

.selbox {
    margin: 9px 0 0 56px;
    width: 658px;
    height: 362px;
    position: relative;
    padding: 6px;
    background: repeating-linear-gradient(-45deg, #222 0 1px, #fff 1px 3px);
}

.sel-inner {
    height: 100%;
    background-color: #fff;
    padding: 7px 0 0 10px;
}

.tline {
    position: absolute;
    left: 2px;
    right: 20px;
    top: 0;
    height: 2px;
    background-color: #5f8082;
}

.h {
    position: absolute;
    width: 7px;
    height: 7px;
    border: 1px solid #222;
    border-radius: 50%;
    background-color: #fff;
    z-index: 1;
}

.tl,
.tc,
.tr {
    top: -1px;
}

.bl,
.bc,
.br {
    bottom: -1px;
}

.ml,
.mr {
    top: 178px;
}

.tl,
.ml,
.bl {
    left: 0;
}

.tr,
.mr,
.br {
    right: 0;
}

.tc,
.bc {
    left: 326px;
}

.item {
    display: flex;
    align-items: flex-start;
    font-size: 25px;
    line-height: 29px;
    color: #111;
    white-space: nowrap;
}

.dot {
    width: 10px;
    height: 10px;
    margin: 11px 17px 0 0;
    background-color: #000;
    border-radius: 50%;
    flex: none;
}

.lat {
    font-family: "Liberation Serif", serif;
    line-height: 1;
}

.lat.long {
    letter-spacing: 1.100px;
}

.lat.stop {
    padding-right: 18px;
}

.lat2 {
    font-family: "Liberation Serif", serif;
    line-height: 1;
    letter-spacing: -1.400px;
}

/* black selection sits 3px lower than the glyph box would put it */
.hl {
    display: inline-block;
    vertical-align: top;
    height: 36px;
    margin: -2px 0 -5px;
    padding-top: 2px;
    background-color: #000;
    color: #fff;
}

.subitem {
    display: flex;
    align-items: flex-start;
    margin: 9.500px 0 0 61px;
    font-size: 20.800px;
    line-height: 25px;
    color: #111;
    white-space: nowrap;
}

.item + .subitem {
    margin-top: 11px;
}

.subdot {
    width: 8px;
    height: 8px;
    margin: 4px 12px 0 -1px;
    background-color: #8ec4c4;
    border-radius: 50%;
    flex: none;
}

.s-foot {
    margin: 17px 0 0 58px;
    width: 650px;
    display: flex;
    justify-content: space-between;
    line-height: 24px;
    font-size: 18.600px;
    font-weight: bold;
    color: #3b666a;
    white-space: nowrap;
}

.s-foot b {
    font-family: "Liberation Sans", sans-serif;
    font-size: 20px;
}

.site {
    font-family: "Liberation Sans", sans-serif;
    font-size: 18.800px;
}

/* status bar */
.statusbar {
    height: 20px;
    flex: none;
    display: flex;
    align-items: center;
    color: #333;
    background: linear-gradient(#ece9d8, #d6d9d6 30%, #cfd5d5);
    border-radius: 14px 14px 0 0;
}

.st-a {
    width: 352px;
    padding-left: 84px;
}

.st-b {
    width: 338px;
}

.st-ic {
    width: 20px;
    height: 16px;
}

/* taskbar */
.taskbar {
    height: 30px;
    flex: none;
    display: flex;
    align-items: center;
    background: linear-gradient(#2a5fc8, #3d8ae8 8%, #3579df 16%, #2f6fd8 50%, #2f72da 85%, #2459bf);
    color: #dfe8f8;
}

.start {
    width: 96px;
    height: 30px;
    flex: none;
    display: flex;
    align-items: center;
    gap: 6px;
    padding-left: 9px;
    border-radius: 0 12px 12px 0;
    background: linear-gradient(#3d8f3d, #4ea14e 15%, #3a8f3a 60%, #2f7d32);
    color: #e8f2e4;
    font-size: 18px;
    font-style: italic;
}

.start .ic {
    width: 20px;
    height: 20px;
}

.quick {
    width: 188px;
    flex: none;
    display: flex;
    align-items: center;
    gap: 7px;
    padding-left: 13px;
}

.chev {
    margin-left: 24px;
    align-self: flex-start;
    color: #cfe0f8;
    font-size: 13px;
    line-height: 18px;
}

.tasks {
    display: flex;
    gap: 2px;
    flex: none;
}

.task {
    width: 68px;
    height: 25px;
    flex: none;
    display: flex;
    align-items: center;
    gap: 4px;
    padding-left: 8px;
    border-radius: 2px;
    background-color: #3c81e6;
    color: #d5e2f7;
    white-space: nowrap;
    font-size: 11px;
}

.task.active {
    background-color: #2155b8;
}

.task.orange {
    background-color: #c9813a;
    color: #f0dcc0;
}

.devdoc {
    width: 112px;
    flex: none;
    display: flex;
    align-items: center;
    gap: 8px;
    padding-left: 9px;
    color: #7fb0ec;
}

.devdoc .chev {
    margin: 0 0 0 4px;
}

.tray {
    flex: 1;
    height: 30px;
    display: flex;
    align-items: center;
    gap: 2px;
    padding-left: 10px;
    background: linear-gradient(#0f7fd8, #1c98ea 15%, #1a8fe3 85%, #1272c8);
    border-left: 1px solid #123f8e;
}

.clock {
    margin-left: 5px;
    color: #eaf3fd;
    font-size: 11px;
}
```
